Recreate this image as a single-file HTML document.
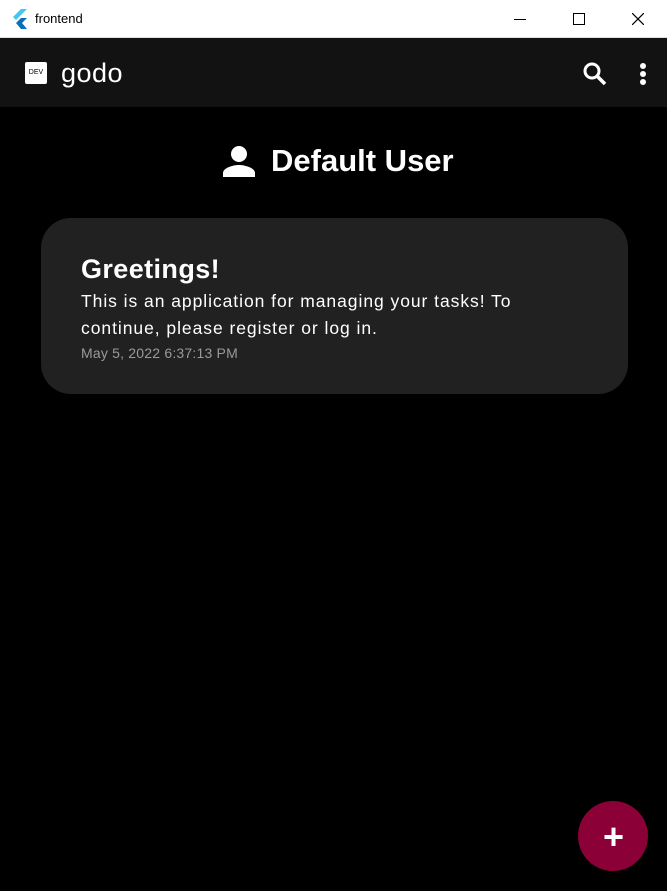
<!DOCTYPE html>
<html><head><style>
body{margin:0;width:667px;height:891px;background:#000;font-family:"Liberation Sans",sans-serif;position:relative;overflow:hidden}
.tb{position:absolute;left:0;top:0;width:667px;height:38px;background:#fff;border-bottom:1px solid #ddd;box-sizing:border-box}
.ab{position:absolute;left:0;top:38px;width:667px;height:69px;background:#121212}
.t{position:absolute;color:#fff;white-space:nowrap}
.card{position:absolute;left:41px;top:218px;width:587px;height:176px;background:#212121;border-radius:30px}
.fab{position:absolute;left:578px;top:801px;width:70px;height:70px;border-radius:50%;background:#8b0036}
</style></head><body>
<div class="tb">
<svg style="position:absolute;left:11px;top:9px" width="18" height="20" viewBox="0 0 18 20"><path d="M10 0h6L5 11 2 8z" fill="#45c5f4"/><path d="M10 9h6l-5 5 5 6h-6l-5-6z" fill="#0b6fb8"/></svg>
<div class="t" style="left:35px;top:11px;color:#000;font-size:13px">frontend</div>
<div style="position:absolute;left:514px;top:19px;width:12px;height:1px;background:#000"></div>
<div style="position:absolute;left:573px;top:13px;width:10px;height:10px;border:1px solid #000"></div>
<svg style="position:absolute;left:632px;top:13px" width="12" height="12"><path d="M0 0L12 12M12 0L0 12" stroke="#000" stroke-width="1.2"/></svg>
</div>
<div class="ab">
<div style="position:absolute;left:25px;top:24px;width:22px;height:22px;background:#fff;border-radius:2px;color:#000;font-size:7px;text-align:center;line-height:22px">DEV</div>
<div class="t" style="left:61px;top:20px;font-size:27px;letter-spacing:0.5px">godo</div>
<svg style="position:absolute;left:582px;top:23px" width="26" height="26" viewBox="0 0 26 26"><circle cx="10" cy="10" r="7" fill="none" stroke="#fff" stroke-width="3"/><path d="M15 15l8 8" stroke="#fff" stroke-width="3.5"/></svg>
<svg style="position:absolute;left:638px;top:24px" width="10" height="24"><circle cx="5" cy="4" r="3" fill="#fff"/><circle cx="5" cy="12" r="3" fill="#fff"/><circle cx="5" cy="20" r="3" fill="#fff"/></svg>
</div>
<svg style="position:absolute;left:223px;top:145px" width="32" height="32" viewBox="0 0 32 32"><circle cx="16" cy="9" r="8" fill="#fff"/><path d="M0 32v-4c0-5 10-8 16-8s16 3 16 8v4z" fill="#fff"/></svg>
<div class="t" style="left:271px;top:143px;font-size:31px;font-weight:bold">Default User</div>
<div class="card">
<div class="t" style="left:40px;top:36px;font-size:27px;font-weight:bold;letter-spacing:0.4px">Greetings!</div>
<div class="t" style="left:40px;top:70px;font-size:17.5px;line-height:27px;letter-spacing:0.95px">This is an application for managing your tasks! To<br>continue, please register or log in.</div>
<div class="t" style="left:40px;top:127px;font-size:14px;color:#9a9a9a;letter-spacing:0.2px">May 5, 2022 6:37:13 PM</div>
</div>
<div class="fab"><div class="t" style="left:25px;top:15px;font-size:36px;font-weight:bold">+</div></div>
</body></html>
